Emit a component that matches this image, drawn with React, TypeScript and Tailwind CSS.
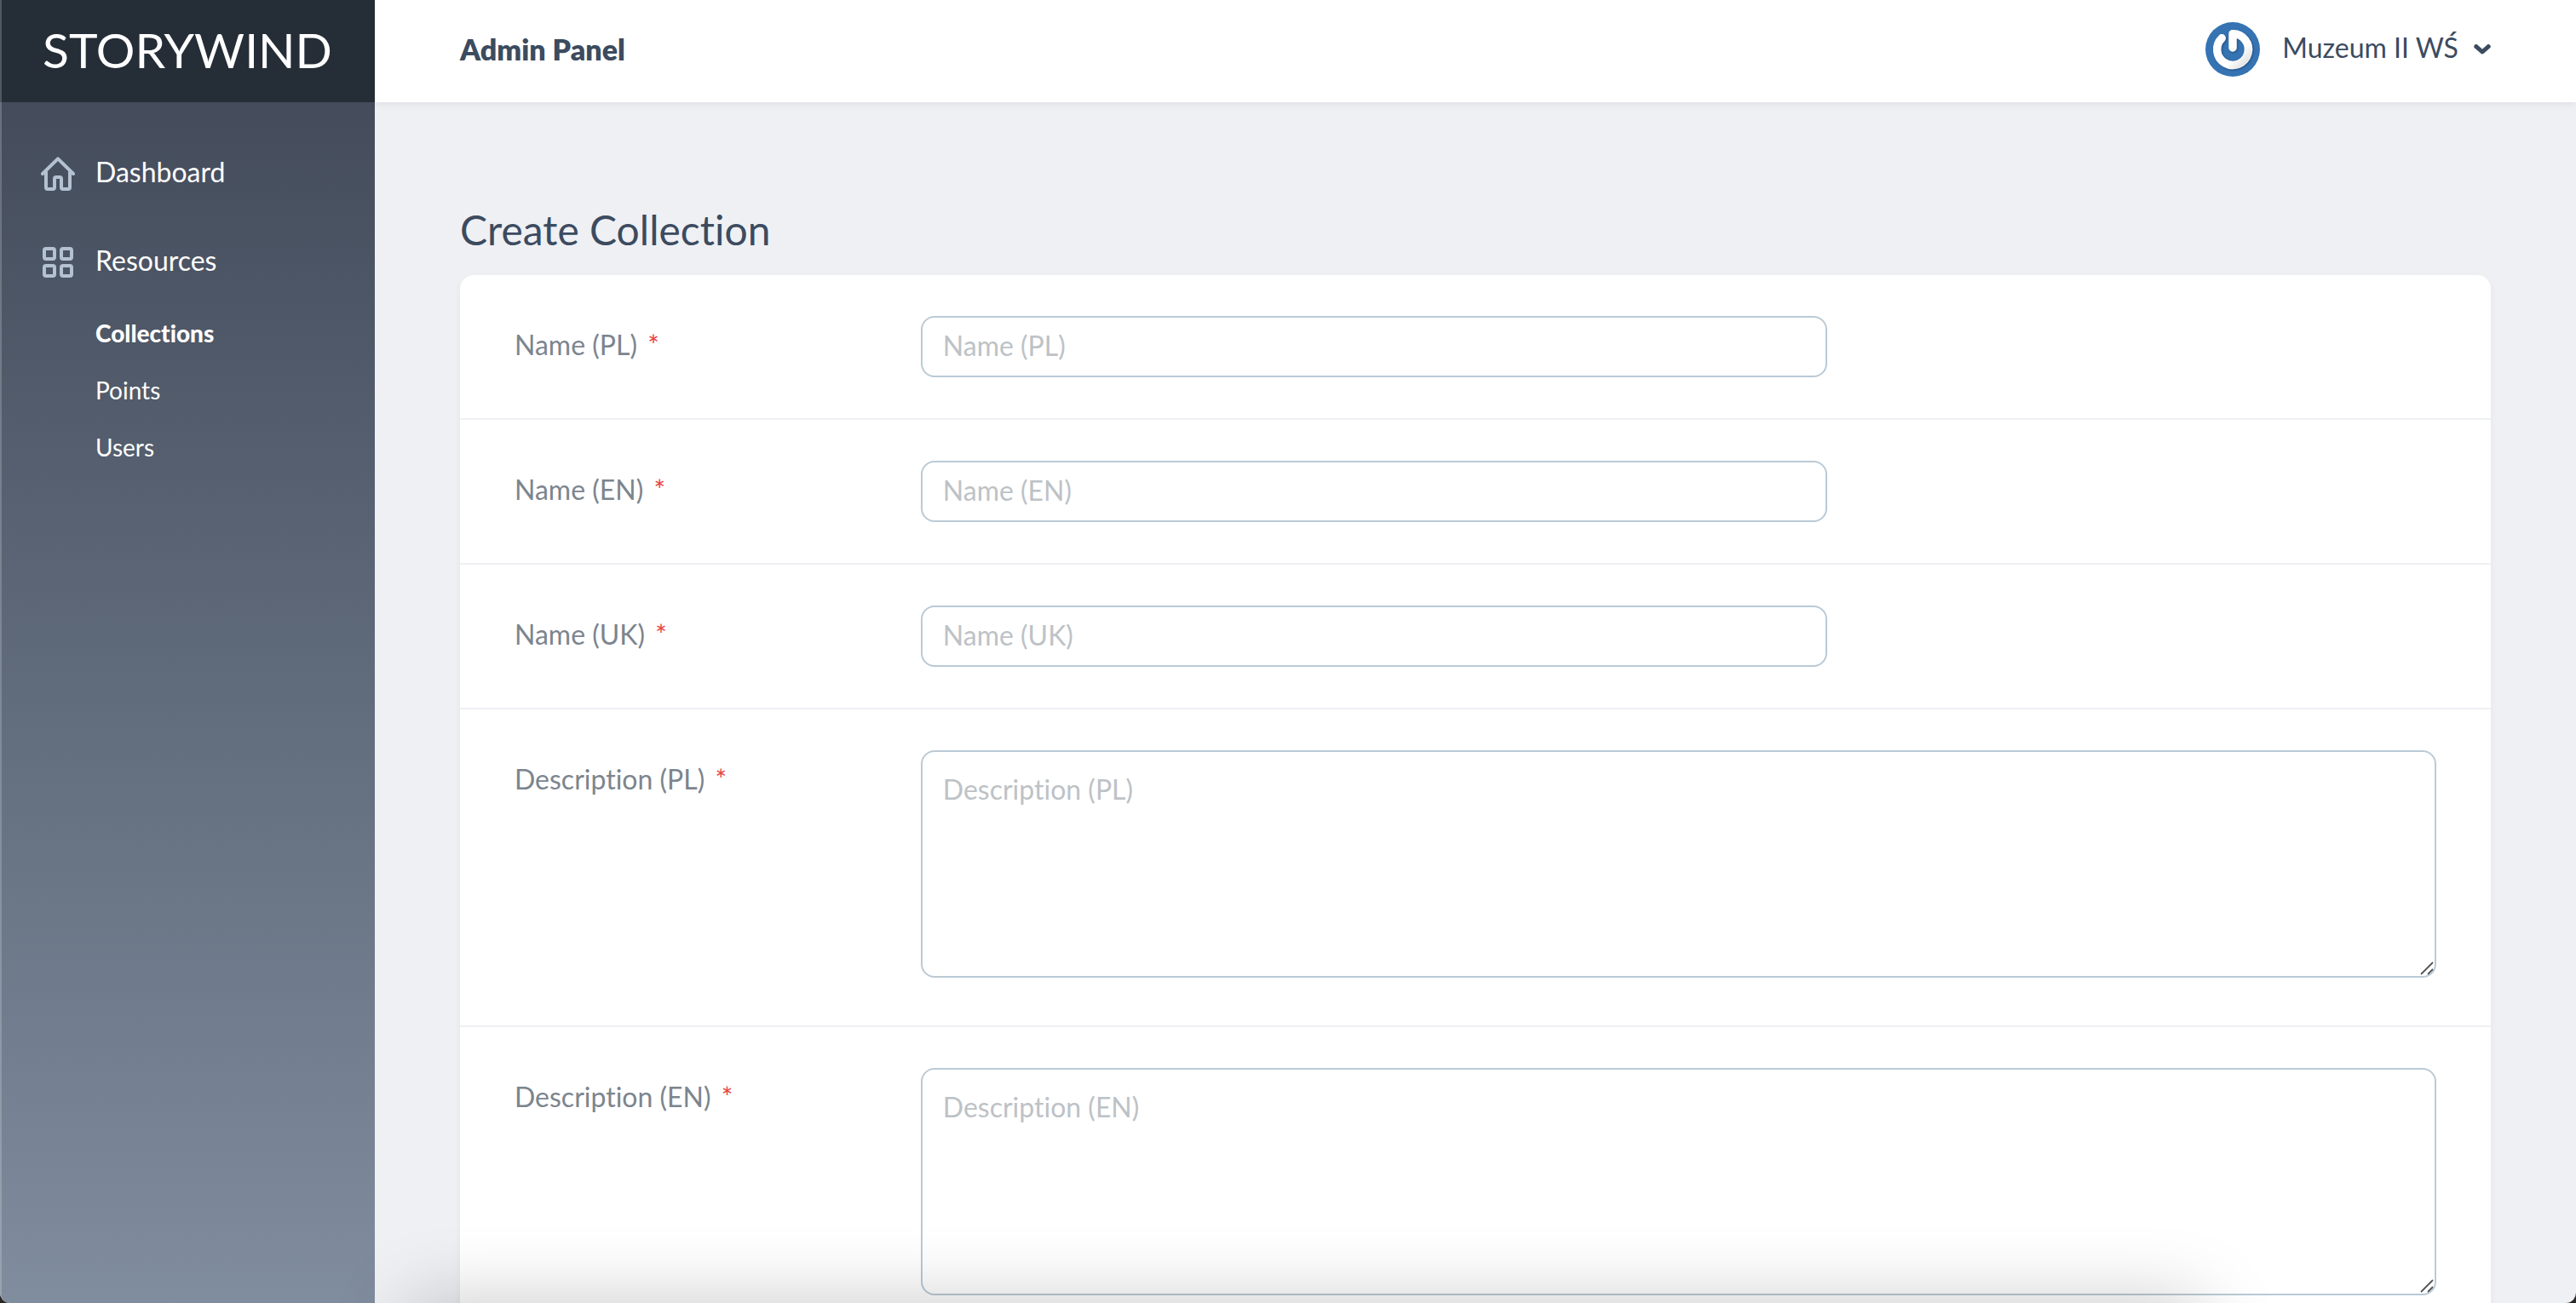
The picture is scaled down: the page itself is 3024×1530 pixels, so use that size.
import React from "react";

function HomeIcon() {
  return (
    <svg className="size-10 shrink-0" viewBox="0 0 40 40" fill="none" stroke="#b3c1d1" strokeWidth="4" strokeLinecap="round" strokeLinejoin="round" aria-hidden="true">
      <path d="M2 20 20 2.4 38 20" />
      <path d="M6 18V36a2 2 0 0 0 2 2h6a2 2 0 0 0 2-2V26a2 2 0 0 1 2-2h4a2 2 0 0 1 2 2v10a2 2 0 0 0 2 2h6a2 2 0 0 0 2-2V18" />
    </svg>
  );
}

function GridIcon() {
  return (
    <svg className="size-10 shrink-0" viewBox="0 0 40 40" fill="none" stroke="#b3c1d1" strokeWidth="4" aria-hidden="true">
      <rect x="4" y="4" width="12" height="12" rx="2" />
      <rect x="24" y="4" width="12" height="12" rx="2" />
      <rect x="4" y="24" width="12" height="12" rx="2" />
      <rect x="24" y="24" width="12" height="12" rx="2" />
    </svg>
  );
}

function Avatar() {
  return (
    <svg className="size-16" viewBox="0 0 64 64" fill="none" aria-hidden="true">
      <defs>
        <filter id="avatar-shadow" x="-20%" y="-20%" width="150%" height="150%">
          <feDropShadow dx="1" dy="1" stdDeviation="1" floodColor="#0b2c4d" floodOpacity="0.55" />
        </filter>
        <linearGradient id="avatar-shade" x1="0.3" y1="0.3" x2="1" y2="1">
          <stop offset="0.5" stopColor="#ffffff" />
          <stop offset="1" stopColor="#dcdcdc" />
        </linearGradient>
      </defs>
      <circle cx="32" cy="32" r="32" fill="#3573b3" />
      <g filter="url(#avatar-shadow)">
        <path d="M32 30V13.6A18.4 18.4 0 1 1 19.2 18.8" stroke="#fdfdfd" strokeWidth="9.4" strokeLinecap="round" strokeLinejoin="round" />
      </g>
      <path d="M32 13.6A18.4 18.4 0 1 1 19.2 18.8" stroke="url(#avatar-shade)" strokeWidth="8" strokeLinecap="round" />
    </svg>
  );
}

const resources = [
  { name: "Collections", active: true },
  { name: "Points", active: false },
  { name: "Users", active: false },
];

function Sidebar() {
  return (
    <aside className="flex w-[440px] shrink-0 flex-col bg-linear-to-t from-[#808d9e] to-[#3f4756] text-white">
      <a href="#" className="flex h-[120px] items-center justify-center bg-[#252d37] pb-1 text-[57px] leading-none">
        STORYWIND
      </a>
      <nav className="flex flex-col gap-16 px-12 pt-16 text-[32px] leading-9">
        <a href="#dashboard" className="flex items-center gap-6">
          <HomeIcon />
          <span className="pb-1">Dashboard</span>
        </a>
        <div>
          <h3 className="flex items-center gap-6">
            <GridIcon />
            <span className="pb-1">Resources</span>
          </h3>
          <ul className="mt-12 flex flex-col gap-9 pl-16 text-[28px] leading-[31px]">
            {resources.map((r) => (
              <li key={r.name}>
                <a href={`#${r.name.toLowerCase()}`} className={r.active ? "font-black" : ""}>
                  {r.name}
                </a>
              </li>
            ))}
          </ul>
        </div>
      </nav>
    </aside>
  );
}

function Header() {
  return (
    <header className="z-10 flex h-[120px] shrink-0 items-center justify-between bg-white px-[100px] pb-1 text-[#3c4b5f] shadow-[0_4px_8px_0_rgba(0,0,0,0.05)]">
      <a href="#" className="text-[34px] leading-10 font-extrabold">
        Admin Panel
      </a>
      <button type="button" className="flex items-center text-[32px] leading-9">
        <Avatar />
        <span className="ml-[26px] pb-1">Muzeum II WŚ</span>
        <svg className="ml-[18px] h-3 w-5" viewBox="0 0 20 12" fill="none" stroke="#3c4b5f" strokeWidth="5" strokeLinecap="round" strokeLinejoin="round" aria-hidden="true">
          <path d="M2.8 2.6 10 9 17.2 2.6" />
        </svg>
      </button>
    </header>
  );
}

const fields = [
  { label: "Name (PL)", long: false },
  { label: "Name (EN)", long: false },
  { label: "Name (UK)", long: false },
  { label: "Description (PL)", long: true },
  { label: "Description (EN)", long: true },
];

function Field({ label, long }: { label: string; long: boolean }) {
  const id = label.toLowerCase().replace(/[^a-z]+/g, "-");
  return (
    <div className="flex border-b-2 border-[#eff0f4]">
      <label htmlFor={id} className="w-1/5 px-16 pt-[62px] leading-10 text-[#7c858e]">
        {label} <span className="ml-1 text-[#e74444]">*</span>
      </label>
      {long ? (
        <div className="w-4/5 px-16 pt-12 pb-14">
          <div className="relative">
            <textarea
              id={id}
              placeholder={label}
              className="block h-[267px] w-full resize-none rounded-2xl border-2 border-[#bacad6] bg-white px-6 py-[22px] leading-11 outline-none placeholder:text-[#bdc2c6]"
            />
            <svg className="pointer-events-none absolute right-[3px] bottom-[3px] size-4" viewBox="0 0 16 16" stroke="#54565a" strokeWidth="1.8" aria-hidden="true">
              <path d="M1 15 15 1M9 15l6-6" />
            </svg>
          </div>
        </div>
      ) : (
        <div className="w-1/2 px-16 py-12">
          <input
            id={id}
            type="text"
            placeholder={label}
            className="block h-[72px] w-full rounded-2xl border-2 border-[#bacad6] bg-white px-6 pb-1 outline-none placeholder:text-[#bdc2c6]"
          />
        </div>
      )}
    </div>
  );
}

export default function App() {
  return (
    <div className="h-screen bg-[#2a2725]">
      <div className="relative flex h-full overflow-hidden rounded-b-xl bg-[#eff0f4] font-['Lato','Open_Sans',sans-serif] [font-variant-ligatures:no-common-ligatures]">
        <Sidebar />
        <div className="flex min-w-0 flex-1 flex-col">
          <Header />
          <main className="min-h-0 flex-1 overflow-hidden px-[100px] pt-[120px]">
            <h1 className="mb-[23px] text-[48px] leading-[60px] text-[#3c4b5f]">Create Collection</h1>
            <form className="rounded-2xl bg-white pb-10 text-[32px] shadow-[0_4px_8px_0_rgba(0,0,0,0.05)]">
              {fields.map((f) => (
                <Field key={f.label} label={f.label} long={f.long} />
              ))}
            </form>
          </main>
        </div>
        <div className="pointer-events-none absolute inset-y-0 left-0 w-0.5 bg-white/20" />
        <div className="pointer-events-none absolute top-full right-[440px] left-[480px] z-20 h-40 shadow-[0_0_90px_0_rgba(0,0,0,0.22)]" />
      </div>
    </div>
  );
}
